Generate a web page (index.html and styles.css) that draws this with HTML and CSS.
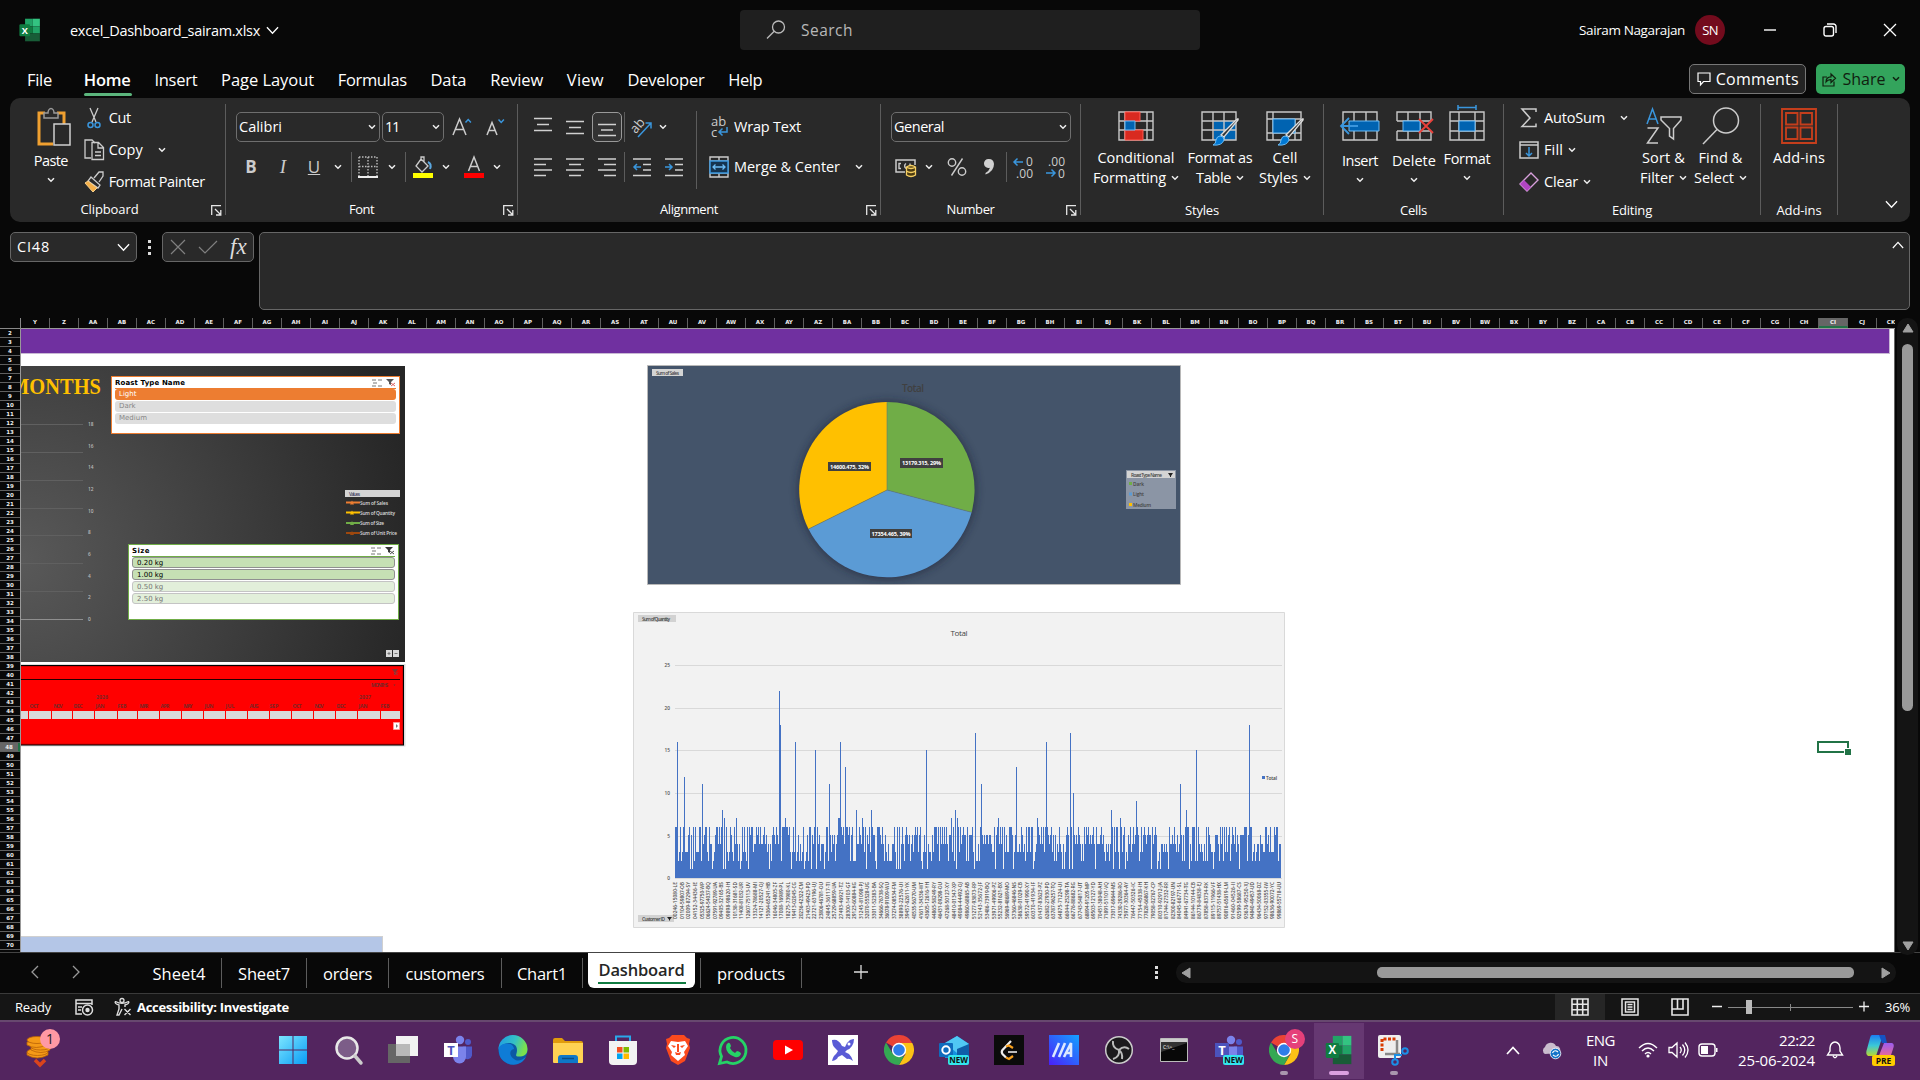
FILE: index.html
```html
<!DOCTYPE html>
<html lang="en">
<head>
<meta charset="utf-8">
<title>excel_Dashboard_sairam.xlsx - Excel</title>
<link rel="stylesheet" href="styles.css">
</head>
<body>
<svg class="defs" aria-hidden="true">
  <defs>
    <symbol id="chev" viewBox="0 0 8 6"><path d="M1 1.2 4 4.2 7 1.2" fill="none" stroke="currentColor" stroke-width="1.5"/></symbol>
    <symbol id="chev-lg" viewBox="0 0 14 9"><path d="m1 1 6 6.500L13 1" fill="none" stroke="currentColor" stroke-width="1.4"/></symbol>
    <symbol id="launch" viewBox="0 0 11 11"><path d="M.7 10V.7H10M4 4l5.5 5.5M9.800 5v5H5" fill="none" stroke="#e6e6e6" stroke-width="1.3"/></symbol>
    <symbol id="excel" viewBox="0 0 30 34">
      <path d="M8 1h11v11H8z" fill="#21a366"/><path d="M19 1h10v11H19z" fill="#33c481"/><path d="M8 12h11v10H8z" fill="#107c41"/><path d="M19 12h10v10H19z" fill="#21a366"/><path d="M8 22h21v11H8z" fill="#185c37"/>
      <rect x="0" y="9" width="15" height="17" rx="1.500" fill="#107c41"/><text x="7.500" y="22" class="logo-letter" font-size="13">X</text>
    </symbol>
    <symbol id="chrome" viewBox="0 0 30 30">
      <path d="M15 15 2 7.500A15 15 0 0 1 28 7.500z" fill="#ea4335"/><path d="M15 8h13.300A15 15 0 0 1 15 30l6.500-11z" fill="#fbc116"/><path d="M2 7.500 9 19l6 3 5-1-5 9A15 15 0 0 1 2 7.500z" fill="#34a853"/>
      <circle cx="15" cy="15" r="7.200" fill="#fff"/><circle cx="15" cy="15" r="5.800" fill="#2f7de9"/>
    </symbol>
    <symbol id="teams" viewBox="0 0 30 30">
      <circle cx="25" cy="7" r="3" fill="#5059c9"/><path d="M20 11.500h9v9a4.500 4.500 0 0 1-8 2z" fill="#5059c9"/><circle cx="17" cy="5" r="4.200" fill="#7b83eb"/><path d="M10 11.500h13v10a6.500 7 0 0 1-13 0z" fill="#7b83eb"/>
    </symbol>
  </defs>
</svg>

<header class="titlebar">
  <svg class="app-logo"><use href="#excel"/></svg>
  <span class="doc-name" data-w="190">excel_Dashboard_sairam.xlsx</span>
  <svg class="doc-chev"><use href="#chev-lg"/></svg>
  <div class="search"><svg width="22" height="22" viewBox="0 0 22 22"><circle cx="13.500" cy="8" r="6" fill="none" stroke="#bbb" stroke-width="1.300"/><path d="M9.200 12.300 2 19.500" stroke="#bbb" stroke-width="1.300"/></svg><span data-w="52">Search</span></div>
  <div class="account">
    <span data-w="106">Sairam Nagarajan</span><b class="avatar">SN</b>
    <svg class="win" viewBox="0 0 14 14"><path d="M1 7h12" stroke="#fff" stroke-width="1.400"/></svg>
    <svg class="win" viewBox="0 0 14 14"><rect x="1" y="3.500" width="9.500" height="9.500" rx="2" fill="none" stroke="#fff" stroke-width="1.400"/><path d="M4 1h6.500a2.500 2.500 0 0 1 2.500 2.500V10" fill="none" stroke="#fff" stroke-width="1.400"/></svg>
    <svg class="win" viewBox="0 0 14 14"><path d="m1 1 12 12M13 1 1 13" stroke="#fff" stroke-width="1.300"/></svg>
  </div>
</header>

<nav class="menu">
  <span data-w="25">File</span><span class="on" data-w="47">Home</span><span data-w="43">Insert</span><span data-w="93">Page Layout</span><span data-w="69">Formulas</span><span data-w="36">Data</span><span data-w="53">Review</span><span data-w="37">View</span><span data-w="77">Developer</span><span data-w="34">Help</span>
  <button class="comments"><svg width="14" height="15" viewBox="0 0 14 15"><path d="M1 1h12v8.500H6.500L3.500 13V9.500H1z" fill="none" stroke="#fff" stroke-width="1.200"/></svg><i data-w="83">Comments</i></button>
  <button class="share"><svg width="15" height="15" viewBox="0 0 15 15"><path d="M5 5H1v9h11V9.500M4 10q0-5 5-5.200V2l4.500 4.300L9 10.500V7.600Q6 7.300 4 10z" fill="none" stroke="#10200f" stroke-width="1.200"/></svg><i data-w="43">Share</i><svg class="c"><use href="#chev"/></svg></button>
</nav>

<section class="ribbon">
  <div class="group g-clip">
    <div class="body">
      <div class="big"><svg width="34" height="39" viewBox="0 0 34 39"><path d="M8 6H2v31h14M20 6h7v11" fill="none" stroke="#f0a030" stroke-width="3"/><path d="M7 11V6h4a3 4.500 0 0 1 6 0h4v5z" fill="#292929" stroke="#999" stroke-width="1.500"/><path d="M17 17h16v21H17z" fill="#292929" stroke="#d0d0d0" stroke-width="1.500"/></svg><span data-w="34">Paste</span><svg class="c"><use href="#chev"/></svg></div>
      <div class="stack">
        <div><svg width="20" height="22" viewBox="0 0 20 22"><path d="M6 1l6 14M14 1 8 15" stroke="#ccc" stroke-width="1.300"/><circle cx="6.500" cy="18" r="2.500" fill="none" stroke="#3a96dd" stroke-width="1.500"/><circle cx="13.500" cy="18" r="2.500" fill="none" stroke="#3a96dd" stroke-width="1.500"/></svg><span data-w="22">Cut</span></div>
        <div><svg width="20" height="22" viewBox="0 0 20 22"><path d="M7 19H1V1h7l3 3" fill="none" stroke="#ccc" stroke-width="1.300"/><path d="M8 3.500h6.500l5 5V20.500H8zM14 4v5h5M11 13h6M11 16.500h6" fill="none" stroke="#ccc" stroke-width="1.300"/></svg><span data-w="34">Copy</span><svg class="c far"><use href="#chev"/></svg></div>
        <div><svg width="20" height="22" viewBox="0 0 20 22"><path d="m10 7 5-6 4 0v4l-4 6M7 6l9 8-2 3-10-7z" fill="#292929" stroke="#ccc" stroke-width="1.300"/><path d="M4 10 1 12l8 9 4-4z" fill="#f5b04a" stroke="#f7cf8a"/></svg><span data-w="96">Format Painter</span></div>
      </div>
    </div>
    <footer><span data-w="58">Clipboard</span><svg class="launch"><use href="#launch"/></svg></footer>
  </div>
  <div class="group g-font">
    <div class="body col">
      <div class="row combos"><div class="combo"><span data-w="43">Calibri</span><svg class="c"><use href="#chev"/></svg></div><div class="combo small"><span data-w="14">11</span><svg class="c"><use href="#chev"/></svg></div>
        <svg width="20" height="22" viewBox="0 0 20 22"><path d="M1 19 7.500 3 14 19M3.500 13.500h8" fill="none" stroke="#ccc" stroke-width="1.500"/><path d="m13.500 6.500 2.700-3 2.700 3" fill="none" stroke="#3a96dd" stroke-width="1.500"/></svg>
        <svg width="20" height="22" viewBox="0 0 20 22"><path d="M1 19 6 6.500 11 19M3 14.500h6" fill="none" stroke="#ccc" stroke-width="1.500"/><path d="m12.500 3.500 2.700 3 2.700-3" fill="none" stroke="#3a96dd" stroke-width="1.500"/></svg></div>
      <div class="row tools">
        <b class="glyph">B</b><i class="glyph serif">I</i><u class="glyph">U</u><svg class="c"><use href="#chev"/></svg><hr>
        <svg width="20" height="22" viewBox="0 0 20 22"><path d="M1 1h18v19M1 1v19M10 1v19M1 10.500h18" fill="none" stroke="#bbb" stroke-width="1.400" stroke-dasharray="1.500 1.500"/><path d="M0 21h20" stroke="#eee" stroke-width="2"/></svg><svg class="c"><use href="#chev"/></svg><hr>
        <svg width="20" height="22" viewBox="0 0 20 22"><path d="m8 3 7 7-6 6-6-6zM8 5V1h3v5" fill="none" stroke="#ccc" stroke-width="1.300"/><path d="M15 6q4 2 2 7" fill="none" stroke="#5aa7e0" stroke-width="2"/><path d="M0 17h20v5H0z" fill="#ff0"/></svg><svg class="c"><use href="#chev"/></svg>
        <svg width="20" height="22" viewBox="0 0 20 22"><path d="M4.500 15 10 1l5.500 14M6.500 10.500h7" fill="none" stroke="#ccc" stroke-width="1.500"/><path d="M0 17h20v5H0z" fill="red"/></svg><svg class="c"><use href="#chev"/></svg>
      </div>
    </div>
    <footer><span data-w="25">Font</span><svg class="launch"><use href="#launch"/></svg></footer>
  </div>
  <div class="group g-align">
    <div class="body">
      <div class="col aligns">
        <div class="row">
          <svg width="18" height="22" viewBox="0 0 18 22"><path d="M0 2.500h18M3 8.500h12M0 14.500h18" stroke="#d0d0d0" stroke-width="1.500"/></svg>
          <svg width="18" height="22" viewBox="0 0 18 22"><path d="M0 5.500h18M3 11.500h12M0 17.500h18" stroke="#d0d0d0" stroke-width="1.500"/></svg>
          <span class="pressed"><svg width="18" height="22" viewBox="0 0 18 22"><path d="M0 8.500h18M3 14h12M0 19.500h18" stroke="#d0d0d0" stroke-width="1.500"/></svg></span><hr>
          <svg width="22" height="22" viewBox="0 0 22 22"><text x="0" y="14" font-size="13" fill="#ccc" transform="rotate(-50 7 11)">ab</text><path d="M7 21 20 7M14.500 7H20v5.500" fill="none" stroke="#3a96dd" stroke-width="1.500"/></svg><svg class="c"><use href="#chev"/></svg>
        </div>
        <div class="row">
          <svg width="18" height="20" viewBox="0 0 18 20"><path d="M0 2h18M0 7.500h12M0 13h18M0 18.500h12" stroke="#d0d0d0" stroke-width="1.500"/></svg>
          <svg width="18" height="20" viewBox="0 0 18 20"><path d="M0 2h18M3 7.500h12M0 13h18M3 18.500h12" stroke="#d0d0d0" stroke-width="1.500"/></svg>
          <svg width="18" height="20" viewBox="0 0 18 20"><path d="M0 2h18M6 7.500h12M0 13h18M6 18.500h12" stroke="#d0d0d0" stroke-width="1.500"/></svg><hr>
          <svg width="18" height="20" viewBox="0 0 18 20"><path d="M0 2h18M10 7.500h8M10 13h8M0 18.500h18" stroke="#d0d0d0" stroke-width="1.500"/><path d="M8 10H1m3-3-3 3 3 3" fill="none" stroke="#3a96dd" stroke-width="1.500"/></svg>
          <svg width="18" height="20" viewBox="0 0 18 20"><path d="M0 2h18M10 7.500h8M10 13h8M0 18.500h18" stroke="#d0d0d0" stroke-width="1.500"/><path d="M0 10h7M4 7l3 3-3 3" fill="none" stroke="#3a96dd" stroke-width="1.500"/></svg>
        </div>
      </div>
      <hr class="tall">
      <div class="col wraps">
        <div><svg width="20" height="22" viewBox="0 0 20 22"><text x="2" y="10" font-size="13" fill="#ccc">ab</text><text x="2" y="21" font-size="13" fill="#ccc">c</text><path d="M18 11v5h-8m3.500-3.500L10 16l3.500 3.500" fill="none" stroke="#3a96dd" stroke-width="1.500"/></svg><span data-w="67">Wrap Text</span></div>
        <div><svg width="20" height="22" viewBox="0 0 20 22"><path d="M1 1h18v20H1zM10 1v20M1 5h18M1 17h18" fill="none" stroke="#ccc" stroke-width="1.400"/><path d="M1 5h18v12H1z" fill="#153450" stroke="#3a96dd" stroke-width="1.500"/><path d="M4 11h12M6.500 8.500 4 11l2.500 2.500M13.500 8.500 16 11l-2.500 2.500" fill="none" stroke="#6cbcf5" stroke-width="1.300"/></svg><span data-w="106">Merge &amp; Center</span><svg class="c"><use href="#chev"/></svg></div>
      </div>
    </div>
    <footer><span data-w="58">Alignment</span><svg class="launch"><use href="#launch"/></svg></footer>
  </div>
  <div class="group g-num">
    <div class="body col">
      <div class="row combos"><div class="combo"><span data-w="50">General</span><svg class="c"><use href="#chev"/></svg></div></div>
      <div class="row tools">
        <svg width="22" height="22" viewBox="0 0 22 22"><path d="M10 16H1V4h19v5" fill="none" stroke="#ccc" stroke-width="1.500"/><path d="M6 7.500H4v5h2M11 7.500a3 3 0 0 0 0 5M15 7.500v2" fill="none" stroke="#ccc" stroke-width="1.400"/><path d="M11.500 11v8q4.500 3 9 0v-8q-4.500-3-9 0q4.500 3 9 0M11.500 15q4.500 3 9 0" fill="#4c3b10" stroke="#f5cf62" stroke-width="1.300"/></svg><svg class="c"><use href="#chev"/></svg>
        <svg width="20" height="20" viewBox="0 0 20 20"><circle cx="5" cy="5.500" r="3.700" fill="none" stroke="#ccc" stroke-width="1.400"/><circle cx="15" cy="14.500" r="3.700" fill="none" stroke="#ccc" stroke-width="1.400"/><path d="M15.500 1.500 4.500 18.500" stroke="#ccc" stroke-width="1.400"/></svg>
        <svg width="12" height="18" viewBox="0 0 12 18"><path d="M6 1a4.500 4.500 0 1 0 1 8.700Q6 13 2.500 15v1.500Q11 13.500 11 6 10.500 1 6 1z" fill="#d0d0d0"/></svg><hr>
        <svg width="22" height="22" viewBox="0 0 22 22"><text x="13" y="9.500" font-size="12" fill="#ccc">0</text><text x="3" y="21.500" font-size="12" fill="#ccc" textLength="17">.00</text><path d="M10 6H1m3.500-3.500L1 6l3.500 3.500" fill="none" stroke="#3a96dd" stroke-width="1.500"/></svg>
        <svg width="22" height="22" viewBox="0 0 22 22"><text x="3" y="9.500" font-size="12" fill="#ccc" textLength="17">.00</text><text x="13" y="21.500" font-size="12" fill="#ccc">0</text><path d="M1 17h9M6.500 13.500 10 17l-3.500 3.500" fill="none" stroke="#3a96dd" stroke-width="1.500"/></svg>
      </div>
    </div>
    <footer><span data-w="48">Number</span><svg class="launch"><use href="#launch"/></svg></footer>
  </div>
  <div class="group g-styles">
    <div class="body bigs">
      <div class="big two"><svg width="36" height="38" viewBox="0 0 36 38"><path d="M1 5h34v28H1zM1 14h34M1 23h34M7 5v28M29 5v28" fill="none" stroke="#c8c8c8" stroke-width="1.400"/><path d="M7 5h15v9H7zM7 23h18v10H7z" fill="#d92a20" stroke="#ff5a50"/><path d="M7 14h10v9H7z" fill="#0063b1" stroke="#6cbcf5"/></svg><span data-w="77">Conditional</span><p><span data-w="73">Formatting</span><svg class="c"><use href="#chev"/></svg></p></div>
      <div class="big two"><svg width="38" height="38" viewBox="0 0 38 38"><path d="M13 14h22v19H13z" fill="#0063b1"/><path d="M1 5h34v28H1zM1 14h34M1 23h34M12 5v28M23 5v28" fill="none" stroke="#c8c8c8" stroke-width="1.400"/><path d="m37 13-14 17-3-2L34 14q4-4 3-1z" fill="#333" stroke="#ddd" stroke-width="1.300"/><path d="M19 29q4 0 4 4-2 6-11 5 3-1 3-5 1-4 4-4z" fill="#0078d4" stroke="#6cbcf5"/></svg><span data-w="65">Format as</span><p><span data-w="35">Table</span><svg class="c"><use href="#chev"/></svg></p></div>
      <div class="big two"><svg width="38" height="38" viewBox="0 0 38 38"><path d="M1 5h34v28H1zM1 12h34M7 5v28M29 12v21M1 26h34" fill="none" stroke="#c8c8c8" stroke-width="1.400"/><path d="M7 12h22v14H7z" fill="#0063b1" stroke="#6cbcf5"/><path d="m37 13-14 17-3-2L34 14q4-4 3-1z" fill="#333" stroke="#ddd" stroke-width="1.300"/><path d="M19 29q4 0 4 4-2 6-11 5 3-1 3-5 1-4 4-4z" fill="#0078d4" stroke="#6cbcf5"/></svg><span data-w="25">Cell</span><p><span data-w="39">Styles</span><svg class="c"><use href="#chev"/></svg></p></div>
    </div>
    <footer><span data-w="34">Styles</span></footer>
  </div>
  <div class="group g-cells">
    <div class="body bigs">
      <div class="big"><svg width="40" height="39" viewBox="0 0 40 39"><path d="M3 5h34v28H3zM14 5v28M26 5v28" fill="none" stroke="#c8c8c8" stroke-width="1.400"/><path d="M9 14h30v10H9z" fill="#0063b1" stroke="#6cbcf5"/><path d="M18 19H1M9 11l-8 8 8 8" fill="none" stroke="#3a96dd" stroke-width="1.800"/></svg><span data-w="36">Insert</span><svg class="c"><use href="#chev"/></svg></div>
      <div class="big"><svg width="40" height="39" viewBox="0 0 40 39"><path d="M3 14V5h34v9M3 24v9h34v-9M14 5v28M26 5v28M3 14h34M3 24h34" fill="none" stroke="#c8c8c8" stroke-width="1.400"/><path d="M9 14h17v10H9z" fill="#0063b1" stroke="#6cbcf5"/><path d="m25 12 14 14M39 12 25 26" stroke="#e8403a" stroke-width="1.800"/></svg><span data-w="44">Delete</span><svg class="c"><use href="#chev"/></svg></div>
      <div class="big up"><svg width="38" height="40" viewBox="0 0 38 40"><path d="M2 8h34v28H2zM2 17h34M2 27h34M11 8v28M27 8v28" fill="none" stroke="#c8c8c8" stroke-width="1.400"/><path d="M11 17h16v10H11z" fill="#0063b1" stroke="#6cbcf5"/><path d="M10 3.500h18M10 1v5M28 1v5" fill="none" stroke="#3a96dd" stroke-width="1.500"/></svg><span data-w="47">Format</span><svg class="c"><use href="#chev"/></svg></div>
    </div>
    <footer><span data-w="27">Cells</span></footer>
  </div>
  <div class="group g-edit">
    <div class="body">
      <div class="stack">
        <div><svg width="20" height="22" viewBox="0 0 20 22"><path d="M17 5V2H3l8 9-8 8.500h14v-3" fill="none" stroke="#ccc" stroke-width="1.500"/></svg><span data-w="61">AutoSum</span><svg class="c mid"><use href="#chev"/></svg></div>
        <div><svg width="20" height="20" viewBox="0 0 20 20"><path d="M1 2h18v16H1zM1 5h18" fill="none" stroke="#ccc" stroke-width="1.500"/><path d="M10 7v9M7 13l3 3 3-3" fill="none" stroke="#3a96dd" stroke-width="1.500"/></svg><span data-w="19">Fill</span><svg class="c"><use href="#chev"/></svg></div>
        <div><svg width="20" height="22" viewBox="0 0 20 22"><path d="M12 2l7 7-11 11-7-7z" fill="none" stroke="#d8a0dc" stroke-width="1.400"/><path d="m5 9 7 7-4 4-7-7z" fill="#b146c2"/></svg><span data-w="34">Clear</span><svg class="c"><use href="#chev"/></svg></div>
      </div>
      <div class="big two"><svg width="38" height="38" viewBox="0 0 38 38"><path d="M2 17 7.500 2 13 17M4 12h7" fill="none" stroke="#3a96dd" stroke-width="1.500"/><path d="M2.500 21H13L2.500 36H13M16 10h20v3l-7.500 8.500V32l-4-3v-7.500L16 13z" fill="none" stroke="#ccc" stroke-width="1.500"/></svg><span data-w="43">Sort &amp;</span><p><span data-w="34">Filter</span><svg class="c"><use href="#chev"/></svg></p></div>
      <div class="big two"><svg width="38" height="38" viewBox="0 0 38 38"><circle cx="24" cy="13.500" r="12.500" fill="none" stroke="#ccc" stroke-width="1.500"/><path d="M15 22.500 1 37" stroke="#ccc" stroke-width="1.500"/></svg><span data-w="44">Find &amp;</span><p><span data-w="40">Select</span><svg class="c"><use href="#chev"/></svg></p></div>
    </div>
    <footer><span data-w="40">Editing</span></footer>
  </div>
  <div class="group g-add">
    <div class="body bigs"><div class="big two"><svg width="36" height="38" viewBox="0 0 36 38"><path d="M1 2h34v34H1zM5 6h11.500v11.500H5zM19.500 6H31v11.500H19.500zM5 20.500h11.500V32H5zM19.500 20.500H31V32H19.500z" fill="none" stroke="#c43e1c" stroke-width="1.900"/></svg><span data-w="52">Add-ins</span></div></div>
    <footer><span data-w="45">Add-ins</span></footer>
  </div>
  <svg class="collapse"><use href="#chev-lg"/></svg>
</section>

<section class="formula">
  <div class="namebox"><span data-w="33">CI48</span><svg><use href="#chev-lg"/></svg></div>
  <svg class="dots" width="4" height="16" viewBox="0 0 4 16"><path d="M0 0h3v3H0zM0 6h3v3H0zM0 12h3v3H0z" fill="#ddd"/></svg>
  <div class="fx"><svg width="16" height="16" viewBox="0 0 16 16"><path d="m1 1 14 14M15 1 1 15" stroke="#808080" stroke-width="1.200"/></svg><svg width="20" height="14" viewBox="0 0 20 14"><path d="m1 7 6 6L19 1" fill="none" stroke="#808080" stroke-width="1.200"/></svg><em>fx</em></div>
  <div class="input"><svg><use href="#chev-lg"/></svg></div>
</section>

<main class="sheet">
  <div class="corner"></div>
  <div class="cols" id="cols"></div>
  <div class="rows" id="rows"></div>
  <div class="canvas">
    <div class="band"></div>
    <div class="lowband"></div>
    <svg class="obj trend" viewBox="21 366 384 296" width="384" height="296">
      <defs><radialGradient id="dark" gradientUnits="userSpaceOnUse" cx="21" cy="560" r="400"><stop offset="0" stop-color="#595959"/><stop offset="1" stop-color="#262626"/></radialGradient></defs>
      <path d="M21 366h384v296H21z" fill="url(#dark)"/>
      <text x="101" y="394" text-anchor="end" class="months" textLength="91" lengthAdjust="spacingAndGlyphs">MONTHS</text>
      <path d="M21 424.500h62M21 452.500h62M21 480.500h62M21 508.500h62M21 535.500h62M21 563.500h62M21 591.500h62" stroke="#606060"/><path d="M21 619.500h62" stroke="#8f8f8f"/>
      <g id="trendAxis" class="tiny" fill="#bbb"></g>
      <path d="M345 490h55v7h-55z" fill="#d4d4d4"/><text x="349" y="495.500" class="tiny" fill="#446" textLength="11">Values</text>
      <g stroke-width="2"><path d="M346 502.500h14" stroke="#ed7d31"/><path d="M346 512.500h14" stroke="#ffc000"/><path d="M346 523h14" stroke="#70ad47"/><path d="M346 533h14" stroke="#9e480e"/></g>
      <path d="m352 500.500 2 4h-4z" fill="#ed7d31"/><path d="m352 510.500 2 4h-4z" fill="#ffc000"/><path d="m352 521 2 4h-4z" fill="#70ad47"/><path d="m352 531 2 4h-4z" fill="#9e480e"/>
      <g class="tiny" fill="#ddd"><text x="360" y="504.500" textLength="28">Sum of Sales</text><text x="360" y="514.500" textLength="35">Sum of Quantity</text><text x="360" y="525" textLength="24">Sum of Size</text><text x="360" y="535" textLength="37">Sum of Unit Price</text></g>
      <path d="M386 650h6v7h-6zM393 650h6v7h-6z" fill="#d8d8d8"/><path d="M387.500 653.500h3M389 652v3M394.500 653.500h3" stroke="#777"/>
    </svg>
    <div class="obj slicer roast"><h4><b data-w="70">Roast Type Name</b><svg width="24" height="8" viewBox="0 0 24 8"><path d="M0 1h4M1 4h4M0 7h4M6 1h4M6 7h4" stroke="#777"/><path d="M14 0h8l-3 3v3l-2-1V3z" fill="#555"/><path d="m19 4 4 3M23 4l-4 3" stroke="#d66"/></svg></h4><p class="sel">Light</p><p>Dark</p><p>Medium</p></div>
    <div class="obj slicer size"><h4><b data-w="18">Size</b><svg width="24" height="8" viewBox="0 0 24 8"><path d="M0 1h4M1 4h4M0 7h4M6 1h4M6 7h4" stroke="#777"/><path d="M14 0h8l-3 3v3l-2-1V3z" fill="#333"/><path d="m19 4 4 3M23 4l-4 3" stroke="#555"/></svg></h4><p class="sel">0.20 kg</p><p class="sel">1.00 kg</p><p>0.50 kg</p><p>2.50 kg</p></div>
    <svg class="obj timeline" viewBox="21 664 385 83" width="385" height="83">
      <path d="M21 664h384.500v82.500H21" fill="#ddd"/><path d="M21 665h383v80.500H21" fill="#000"/><path d="M21 666h382v78.500H21" fill="#d80000"/><path d="M21 667h381v76.500H21" fill="red"/><path d="M21 679.500h379" stroke="#200"/>
      <path d="M392 669h6l-2 3v3l-2-1v-2z" fill="#8d3030"/><path d="m394 672 4 3M398 672l-4 3" stroke="#b03030"/><path d="M393.500 684.500h2l-1 1.500z" fill="#6b3030"/>
      <g class="tiny time-text" id="timeLabels"><text x="371" y="687" textLength="17">MONTHS</text><text x="96" y="699" textLength="12">2026</text><text x="359" y="699" textLength="12">2027</text></g>
      <g id="timeCells" fill="#d9d9d9"></g>
      <path d="M393.500 722.500h6v7h-6z" fill="#fff" stroke="#f99"/><path d="M396 724v4l2-2z" fill="#777"/>
    </svg>
    <svg class="obj pie" viewBox="647 365 534 220" width="534" height="220">
      <defs><filter id="glow" x="-20%" y="-20%" width="140%" height="140%"><feGaussianBlur stdDeviation="4"/></filter></defs>
      <path d="M647.500 365.500h533v219h-533z" fill="#44546a" stroke="#b8b8b8"/>
      <path d="M652 369h31v7h-31z" fill="#d4d4d4"/><text x="656" y="374.500" class="tiny" fill="#444" textLength="23">Sum of Sales</text>
      <text x="913" y="391.500" text-anchor="middle" font-size="10" font-weight="600" fill="#404040" textLength="22">Total</text>
      <circle cx="887" cy="490" r="89" fill="#1a2434" opacity=".6" filter="url(#glow)"/>
      <path d="M887 490V402a87.700 87.700 0 0 1 84.600 110.300z" fill="#70ad47"/><path d="M887 490 971.600 512.300A87.700 87.700 0 0 1 808.500 529z" fill="#5b9bd5"/><path d="M887 490 808.500 529A87.700 87.700 0 0 1 887 402z" fill="#ffc000"/>
      <path d="M887 402v88l84.600 22.300M887 490l-78.500 39" fill="none" stroke="#687a70" stroke-width=".6"/>
      <path d="M828 462h43v9h-43zM900 458h43v10h-43zM870 529h42v9h-42z" fill="#404040"/>
      <g class="pie-num"><text x="849.500" y="469" textLength="39">14600.475, 32%</text><text x="921.500" y="465" textLength="39">13179.315, 29%</text><text x="891" y="536" textLength="39">17354.465, 39%</text></g>
      <path d="M1126 470h50v39h-50z" fill="#8b95a5"/><path d="M1127 471h48v7h-48z" fill="#d4d4d4"/><text x="1131" y="476.500" class="tiny" fill="#444" textLength="31">Roast Type Name</text><path d="M1168 473h5l-2 3v1h-1v-1z" fill="#222"/>
      <path d="M1129 482h3v3h-3z" fill="#70ad47"/><path d="M1129 492.500h3v3h-3z" fill="#5b9bd5"/><path d="M1129 503h3v3h-3z" fill="#ffc000"/>
      <g class="tiny" fill="#444"><text x="1133" y="485.500" textLength="11">Dark</text><text x="1133" y="495.500" textLength="11">Light</text><text x="1133" y="506.500" textLength="18">Medium</text></g>
    </svg>
    <svg class="obj bars" viewBox="633 612 652 316" width="652" height="316">
      <path d="M633.500 612.500h651v315h-651z" fill="#f2f2f2" stroke="#d9d9d9"/>
      <path d="M638 615h38v7h-38zM638 915h36v7h-36z" fill="#d2d2d2"/><text x="642" y="620.500" class="tiny" fill="#444" textLength="28">Sum of Quantity</text><text x="642" y="920.500" class="tiny" fill="#444" textLength="23">Customer ID</text><path d="M667 917h5l-2 2.500v1h-1v-1z" fill="#222"/>
      <text x="959" y="636" text-anchor="middle" font-size="8" fill="#444" textLength="17">Total</text>
      <path d="M675 665.500h607M675 708.500h607M675 750.500h607M675 793.500h607M675 836.500h607M675 878.500h607" stroke="#d9d9d9"/>
      <path id="barPath" fill="#4472c4" shape-rendering="crispEdges"/>
      <g class="tiny" fill="#555" text-anchor="end"><text x="670" y="667">25</text><text x="670" y="710">20</text><text x="670" y="752">15</text><text x="670" y="795">10</text><text x="670" y="838">5</text><text x="670" y="880">0</text></g>
      <g id="orderLabels" class="order"></g>
      <path d="M1262 776h3v3h-3z" fill="#4472c4"/><text x="1266" y="779.500" class="tiny" fill="#444" textLength="11">Total</text>
    </svg>
    <div class="obj cursor"></div>
  </div>
  <div class="vscroll"><svg width="12" height="10" viewBox="0 0 12 10"><path d="M6 1 11 9H1z" fill="#a0a0a0" stroke="#a0a0a0" stroke-linejoin="round"/></svg><i></i><svg width="12" height="10" viewBox="0 0 12 10"><path d="M6 9 11 1H1z" fill="#a0a0a0" stroke="#a0a0a0" stroke-linejoin="round"/></svg></div>
</main>

<nav class="tabs">
  <svg class="arrows" width="52" height="14" viewBox="0 0 52 14"><path d="M8 1 2 7l6 6M43 1l6 6-6 6" fill="none" stroke="#999" stroke-width="1.300"/></svg>
  <span class="t1"><a data-w="53">Sheet4</a></span><span class="t2"><a data-w="52">Sheet7</a></span><span class="t3"><a data-w="49">orders</a></span><span class="t4"><a data-w="79">customers</a></span><span class="t5"><a data-w="50">Chart1</a></span><span class="active"><a data-w="86">Dashboard</a></span><span class="t7"><a data-w="68">products</a></span>
  <svg class="plus" width="16" height="16" viewBox="0 0 16 16"><path d="M8 1v14M1 8h14" stroke="#ddd" stroke-width="1.300"/></svg>
  <svg class="dots" width="4" height="14" viewBox="0 0 4 14"><path d="M0 0h3v3H0zM0 5h3v3H0zM0 10h3v3H0z" fill="#ddd"/></svg>
  <div class="hscroll"><svg width="10" height="12" viewBox="0 0 10 12"><path d="M1 6 9 1v10z" fill="#a0a0a0" stroke="#a0a0a0" stroke-linejoin="round"/></svg><i></i><svg width="10" height="12" viewBox="0 0 10 12"><path d="M9 6 1 1v10z" fill="#a0a0a0" stroke="#a0a0a0" stroke-linejoin="round"/></svg></div>
</nav>

<footer class="status">
  <span data-w="36">Ready</span>
  <svg class="macro" width="18" height="18" viewBox="0 0 18 18"><path d="M7 16H1V2h16v5M1 5.500h16M3 9h4M3 12h3" fill="none" stroke="#ddd" stroke-width="1.500"/><circle cx="12.500" cy="12" r="5" fill="#151515" stroke="#ddd" stroke-width="1.500"/><circle cx="12.500" cy="12" r="2.200" fill="#ddd"/></svg>
  <svg class="acc" width="18" height="18" viewBox="0 0 18 18"><circle cx="8" cy="2.500" r="2" fill="none" stroke="#ddd" stroke-width="1.300"/><path d="M1.500 3.500q-1.500 2 3.500 3.500v4L3 17h2l3-6M14.500 3.500q1.500 2-3.500 3.500v2M1.500 3.500Q8 7 14.500 3.500M10.500 11l6 6M16.500 11l-6 6" fill="none" stroke="#ddd" stroke-width="1.400"/></svg>
  <b data-w="152">Accessibility: Investigate</b>
  <div class="views">
    <span class="view on"><svg width="18" height="18" viewBox="0 0 18 18"><path d="M1 1h16v16H1zM6.300 1v16M11.700 1v16M1 6.300h16M1 11.700h16" fill="none" stroke="#e6e6e6" stroke-width="1.600"/></svg></span>
    <span class="view"><svg width="18" height="18" viewBox="0 0 18 18"><path d="M1 1h16v16H1zM4.500 4h9v10h-9zM6.500 6.500h5M6.500 9h5M6.500 11.500h5" fill="none" stroke="#e6e6e6" stroke-width="1.500"/></svg></span>
    <span class="view"><svg width="18" height="18" viewBox="0 0 18 18"><path d="M1 1h16v16H1zM1 11h11V1M6.500 1v10" fill="none" stroke="#e6e6e6" stroke-width="1.600"/></svg></span>
    <svg width="160" height="16" viewBox="1715 1000 160 16"><path d="M1712 1007.500h10M1859 1007.500h10M1864 1002.500v10" stroke="#eee" stroke-width="1.300"/><path d="M1728 1008.500h125M1790.500 1005v7" stroke="#888"/><path d="M1746 1001h6v14h-6z" fill="#bbb"/></svg>
    <span data-w="25">36%</span>
  </div>
</footer>

<footer class="taskbar">
  <div class="widget"><svg width="32" height="40" viewBox="0 0 32 40"><g fill="#f59a17" stroke="#b96207" stroke-width=".8"><path d="M1 25v3q10 6 21 0v-3z"/><ellipse cx="11.500" cy="25" rx="10.500" ry="3.500"/><path d="M5 20v3q10 5 19 0v-3z"/><ellipse cx="14.500" cy="20" rx="9.500" ry="3"/><path d="M1 15v3q9 5 19 0v-3z"/><ellipse cx="11" cy="13" rx="10" ry="3.500"/></g><path d="m9 33 5 5 5-5" fill="none" stroke="#d9441c" stroke-width="3.500"/></svg><b>1</b></div>
  <div class="apps">
    <span><svg width="30" height="30" viewBox="0 0 30 30"><defs><linearGradient id="wn" x2="1" y2="1"><stop stop-color="#7ce6ff"/><stop offset="1" stop-color="#0a9cf5"/></linearGradient></defs><path d="M1 1h13.500v13.500H1zM15.500 1H29v13.500H15.500zM1 15.500h13.500V29H1zM15.500 15.500H29V29H15.500z" fill="url(#wn)"/></svg></span>
    <span><svg width="30" height="30" viewBox="0 0 30 30"><circle cx="14" cy="13" r="10.500" fill="#7c5d88" stroke="#e8e8e8" stroke-width="2.500"/><path d="m22 21 6 7" stroke="#ccc" stroke-width="3.500" stroke-linecap="round"/></svg></span>
    <span><svg width="30" height="30" viewBox="0 0 30 30"><path d="M8 1h22v20H8z" fill="#f2f2f2"/><path d="M0 9h22v19H0z" fill="#666"/><path d="M8 9h14v12H8z" fill="#b9b9b9"/></svg></span>
    <span><svg width="30" height="30" viewBox="0 0 30 30"><use href="#teams"/><path d="M1 8h14v14H1z" fill="#fff"/><text x="8" y="20" class="mark" font-size="13" fill="#4b53bc">T</text></svg></span>
    <span><svg width="30" height="30" viewBox="0 0 30 30"><defs><linearGradient id="ed" x2="1" y2=".3"><stop stop-color="#1d9ae6"/><stop offset=".6" stop-color="#35c1c4"/><stop offset="1" stop-color="#7be04e"/></linearGradient></defs><circle cx="15" cy="15" r="14.500" fill="#0c59a4"/><path d="M.5 15A14.500 14.500 0 0 1 29.500 14c0 6-4 7.500-8.500 7.500-5 0-2-2-2-6.500 0-5-4-7-8-7-6 0-10 4-10.500 7z" fill="url(#ed)"/><path d="M1 12c5-6 15-4 15 2-5 1-5 7 0 10 4 3 8 1 12-2-4 8-14 10-21 5C2 24 0 18 1 12z" fill="#0f7cd6"/></svg></span>
    <span><svg width="30" height="30" viewBox="0 0 30 30"><path d="M0 5q0-2 2-2h7l3 3h16q2 0 2 2v10H0z" fill="#e19b0c"/><path d="M0 8h30v19q0 1-1 1H1q-1 0-1-1z" fill="#ffd253"/><path d="M5 28v-5q0-3 3-3h14q3 0 3 3v5z" fill="#0f78c8"/><path d="M9 23.500h12" stroke="#0a4d86" stroke-width="1.500"/></svg></span>
    <span><svg width="30" height="30" viewBox="0 0 30 30"><path d="M8 7V1.500h14V7" fill="none" stroke="#2aa8ea" stroke-width="2"/><path d="M1 6h28v20q0 4-4 4H5q-4 0-4-4z" fill="#f3f3f3"/><path d="M9 12h5.500v5.500H9z" fill="#f25022"/><path d="M15.500 12H21v5.500h-5.500z" fill="#7fba00"/><path d="M9 18.500h5.500V24H9z" fill="#00a4ef"/><path d="M15.500 18.500H21V24h-5.500z" fill="#ffb900"/></svg></span>
    <span><svg width="30" height="30" viewBox="0 0 30 30"><path d="M9 0h12l3 3 3 1-1 5 1 4-5 13-7 4-7-4L3 13l1-4-1-5 3-1z" fill="#fb4a1d"/><path d="m8 6 7 1 7-1 3 5-4 6 1 3-7 6-7-6 1-3-4-6z" fill="#fff"/><path d="m8 10 5 1-2 2zM22 10l-5 1 2 2zM12 17l3 1 3-1-1 3h-4zM14 9h2v8h-2z" fill="#fb4a1d"/></svg></span>
    <span><svg width="30" height="30" viewBox="0 0 30 30"><path d="m1.500 28.500 2-7A13 13 0 1 1 9 27z" fill="#54265f" stroke="#25d366" stroke-width="2.800"/><path d="M10 8q2-1 3 3l-1 2q2 4 5 5l2-2q4 1 4 3-2 4-6 3Q8 19 8 12q0-3 2-4z" fill="#25d366"/></svg></span>
    <span><svg width="30" height="30" viewBox="0 0 30 30"><rect y="5" width="30" height="20" rx="4" fill="#f00"/><path d="m12 10.500 8 4.500-8 4.500z" fill="#fff"/></svg></span>
    <span><svg width="30" height="30" viewBox="0 0 30 30"><path d="M0 0h30v30H0z" fill="#fff"/><path d="M4 5q4-1 6 1 3 2 4 5l3 1q2-5 5-7 3-1 4-1 0 4-2 7-2 3-5 4l-2 2 4 2q3 3 4 7-4-3-6-2l-5-4-4 2q-1 3-6 4 1-5 4-7l2-3-3-3Q4 10 4 5z" fill="#5a5bd6"/><circle cx="21" cy="9" r="1.500" fill="#fff"/></svg></span>
    <span><svg width="30" height="30"><use href="#chrome"/></svg></span>
    <span><svg width="30" height="30" viewBox="0 0 30 30"><path d="m6 8 12-7 12 8v14H6z" fill="#1490df"/><path d="m6 8 12-7 12 8-12 9z" fill="#50c8f4"/><path d="M18 14 30 9v15H18z" fill="#0f5ea8"/><rect y="8" width="14" height="14" rx="1" fill="#0f6cbd"/><circle cx="7" cy="15" r="3.700" fill="none" stroke="#fff" stroke-width="2"/><rect x="9" y="20" width="21" height="10" rx="2" fill="#33e5ee"/><text x="19.500" y="28" class="mark" font-size="8" fill="#111">NEW</text></svg></span>
    <span><svg width="30" height="30" viewBox="0 0 30 30"><path d="M0 0h30v30H0z" fill="#0b0b0b"/><path d="M17 6 8.500 15q-1.500 2 0 4l3.500 3.500" fill="none" stroke="#eee" stroke-width="2.200"/><path d="m12 11.500 3-1 4 2.500M12 22.500l3 1.500 4-3" fill="none" stroke="#f7a01d" stroke-width="2.200"/><path d="M14 17h9" stroke="#bbb" stroke-width="2"/></svg></span>
    <span><svg width="30" height="30" viewBox="0 0 30 30"><defs><linearGradient id="mi" y1="1" x2="1" y2="0"><stop stop-color="#4a1ffa"/><stop offset="1" stop-color="#13a2ff"/></linearGradient></defs><path d="M0 0h30v30H0z" fill="url(#mi)"/><path d="m4 22 6-14M10 22l6-14M15 22l7-14v14M18 18h4" fill="none" stroke="#dce8ff" stroke-width="2.600"/></svg></span>
    <span><svg width="30" height="30" viewBox="0 0 30 30"><circle cx="15" cy="15" r="13.300" fill="#1c1a1d" stroke="#ccc" stroke-width="1.500"/><path d="M15 15Q8 13 9 6M15 15q5-5 10-1M15 15q1 7-6 9M15 15q4 3 3 9" fill="none" stroke="#bbb" stroke-width="2"/></svg></span>
    <span><svg width="28" height="24" viewBox="0 0 28 24"><path d="M.5.500h27v23H.5z" fill="#080808" stroke="#bbb"/><path d="M1 1h26v3H1z" fill="#ccc"/><path d="M1 14 27 5v-1H1z" fill="#333"/><text x="3" y="11" font-size="5" fill="#fff">C:\&gt;_</text></svg></span>
    <span><svg width="30" height="30" viewBox="0 0 30 30"><use href="#teams"/><path d="M1 8h14v14H1z" fill="#4b53bc"/><text x="8" y="20" class="mark" font-size="13" fill="#fff">T</text><rect x="9" y="20" width="21" height="10" rx="2" fill="#33e5ee"/><text x="19.500" y="28" class="mark" font-size="8" fill="#111">NEW</text></svg></span>
    <span class="run"><svg width="30" height="30"><use href="#chrome"/></svg><b class="s">S</b></span>
    <span class="run cur"><svg width="30" height="30"><use href="#excel"/></svg></span>
    <span class="run"><svg width="32" height="32" viewBox="0 0 32 32"><rect width="23" height="23" y="1" rx="2" fill="#eee"/><path d="M4 17V5h14" fill="none" stroke="#d83b01" stroke-width="3" stroke-dasharray="3 1.500"/><path d="M19 6v14M7 20h15" stroke="#888" stroke-width="2.500"/><circle cx="17" cy="28" r="2.800" fill="none" stroke="#1b8fe6" stroke-width="2"/><circle cx="27" cy="17" r="2.800" fill="none" stroke="#1b8fe6" stroke-width="2"/><path d="M17 25v-4h7" fill="none" stroke="#1b8fe6" stroke-width="2"/></svg></span>
  </div>
  <div class="tray">
    <svg width="14" height="9" viewBox="0 0 14 9"><path d="m1 8 6-6.500L13 8" fill="none" stroke="#fff" stroke-width="1.700"/></svg>
    <svg width="21" height="18" viewBox="0 0 21 18"><path d="M4 13a4 4 0 0 1 0-7 6 6 0 0 1 11-1 4 4 0 0 1 3 7z" fill="#c9bccd"/><circle cx="14.500" cy="12.500" r="5.300" fill="#1473c8" stroke="#fff" stroke-width=".8"/><path d="M11.500 12q1-3 4-2l1.500 1M17.500 13q-1 3-4 2L12 14" fill="none" stroke="#fff" stroke-width="1.200"/></svg>
    <div class="lang"><span data-w="29">ENG</span><span data-w="15">IN</span></div>
    <svg width="20" height="16" viewBox="0 0 20 16"><path d="M1 6q9-9 18 0M4 9q6-6 12 0M7 12q3-3 6 0" fill="none" stroke="#fff" stroke-width="1.400"/><circle cx="10" cy="14" r="1.600" fill="#fff"/></svg>
    <svg width="20" height="18" viewBox="0 0 20 18"><path d="M1 6.500v5h3l5 4.500V2L4 6.500zM12 6q2.500 3 0 6M14.500 3.500q4.500 5.500 0 11M17 1.500q6 7.500 0 15" fill="none" stroke="#fff" stroke-width="1.300"/></svg>
    <svg width="20" height="14" viewBox="0 0 20 14"><rect x="1" y="1" width="16" height="12" rx="3" fill="none" stroke="#fff" stroke-width="1.400"/><path d="M3 3h7v8H3zM18 5h1.500v4H18z" fill="#fff"/></svg>
    <div class="clock"><span data-w="36">22:22</span><span data-w="77">25-06-2024</span></div>
    <svg width="18" height="20" viewBox="0 0 18 20"><path d="M1.500 15 4 11V8a5 6 0 0 1 10 0v3l2.500 4zM7 16q2 3.500 4 0" fill="none" stroke="#fff" stroke-width="1.400"/></svg>
    <svg width="30" height="34" viewBox="0 0 30 34"><defs><linearGradient id="cp1" x2="0" y2="1"><stop stop-color="#1b7ff2"/><stop offset=".5" stop-color="#3ac7d8"/><stop offset="1" stop-color="#b9d92f"/></linearGradient><linearGradient id="cp2" x2="0" y2="1"><stop stop-color="#9b5cf0"/><stop offset="1" stop-color="#f66a8a"/></linearGradient></defs><path d="M7 2h11l-7 21H3Q0 21 2 16L5 5Q5.500 2 7 2z" fill="url(#cp1)"/><path d="M19 10h8q3 1 1 6l-3 9H13z" fill="url(#cp2)"/><path d="M14 2h6l2 8h-5z" fill="#1553c4"/><rect x="7" y="22" width="23" height="11" rx="2.500" fill="#fc0"/><text x="18.500" y="30.700" class="mark" font-size="8.500" fill="#111">PRE</text></svg>
  </div>
</footer>
<script src="app.js"></script>
</body>
</html>
```

FILE: styles.css
```css
* { box-sizing: border-box; }
html, body { margin: 0; height: 100%; }
body { width: 1920px; height: 1080px; overflow: hidden; background: #080808; color: #fff; font: 14.5px/20px "Open Sans", "Noto Sans", sans-serif; display: flex; flex-direction: column; }
svg { display: block; flex: none; overflow: visible; }
svg text { font-family: "Open Sans", sans-serif; }
.defs { display: none; }
hr { border: 0; margin: 0; width: 1px; height: 30px; background: #5c5c5c; }
[data-w] { white-space: nowrap; display: inline-block; flex: none; }
.c { width: 8px; height: 6px; color: #eee; }
.logo-letter, .mark { font-weight: 700; text-anchor: middle; }
.logo-letter { fill: #fff; }
.far { margin-left: 10px; }
.mid { margin-left: 10px; }

.titlebar { height: 60px; flex: none; display: flex; align-items: center; padding-left: 19px; }
.app-logo { width: 22px; height: 24px; }
.doc-name { margin-left: 29px; margin-top: 1px; }
.doc-chev { width: 13px; height: 9px; margin-left: 6px; }
.search { margin-left: 461px; width: 460px; height: 40px; border-radius: 4px; background: #1f1f1f; display: flex; align-items: center; padding: 0 0 1px 25px; gap: 14px; font-size: 15.5px; color: #b8b8b8; }
.account { margin-left: auto; padding-right: 23px; display: flex; align-items: center; font-size: 13.5px; }
.avatar { width: 30px; height: 30px; border-radius: 50%; background: #730b1d; margin: 0 38px 0 10px; font: 13px/30px "Open Sans", sans-serif; text-align: center; letter-spacing: -.6px; }
.win { width: 14px; height: 14px; margin-right: 46px; }
.win:last-child { margin-right: 0; }

.menu { height: 38px; flex: none; display: flex; align-items: flex-start; padding: 5px 15px 0 27px; gap: 23.7px; font-size: 16.5px; line-height: 30px; }
.menu .on { font-weight: 600; position: relative; margin-left: 8px; }
.menu .on::after { content: ""; position: absolute; left: 0; width: 48px; height: 3px; bottom: -1px; background: #5bb57c; border-radius: 2px; }
.menu button { height: 30px; padding: 0; display: flex; align-items: center; justify-content: center; font: 16px/28px "Open Sans", sans-serif; border-radius: 5px; margin-top: -1px; }
.menu i { font-style: normal; }
.comments { width: 117px; margin-left: auto; background: #242424; border: 1px solid #777; color: #fff; gap: 5px; }
.menu .share { width: 89px; margin-left: -14px; background: #33a45c; border: 0; color: #10200f; gap: 6px; }
.share .c { color: #10200f; }

.ribbon { height: 124px; flex: none; margin: 0 10px; background: #292929; border-radius: 10px; display: flex; position: relative; }
.group { display: flex; flex-direction: column; border-right: 1px solid #5c5c5c; height: 111px; margin-top: 6px; }
.g-clip { width: 216px; } .g-font { width: 292px; } .g-align { width: 363px; } .g-num { width: 200px; } .g-styles { width: 243px; } .g-cells { width: 180px; } .g-edit { width: 257px; } .g-add { width: 77px; }
.body { height: 94px; display: flex; flex: none; }
.col { display: flex; flex-direction: column; }
.group footer { height: 22px; display: flex; justify-content: center; align-items: center; font-size: 13px; position: relative; margin: 1px 0 0 -16px; }
.g-font footer, .g-align footer, .g-num footer { margin-left: -20px; }
.g-styles footer, .g-cells footer, .g-edit footer, .g-add footer { margin: 2px 0 0; }
.launch { position: absolute; right: 3px; top: 6px; width: 11px; height: 11px; }
.big { display: flex; flex-direction: column; align-items: center; padding-top: 3px; }
.big > span { margin-top: 4px; line-height: 21px; }
.big > .c { margin-top: 6px; }
.big.two > svg:first-child { height: 38px; }
.big.two > span { margin-top: 2px; }
.big.two p { margin: 0; display: flex; align-items: center; gap: 5px; line-height: 20px; }
.big.up { padding-top: 0; } .big.up > span { margin-top: 4px; }
.g-clip .big { width: 54px; margin-left: 14px; padding-top: 3px; }
.g-clip .big > svg:first-child { transform: translateX(3px); }
.stack { margin-left: 6px; width: 142px; }
.stack > div { height: 32px; display: flex; align-items: center; gap: 5px; position: relative; top: -2px; }
.combos { height: 46px; padding-left: 10px; display: flex; align-items: center; gap: 2px; }
.combo { width: 144px; height: 30px; border: 1px solid #6e6e6e; border-radius: 5px; display: flex; align-items: center; justify-content: space-between; padding: 0 3px 0 2px; }
.combo.small { width: 62px; margin-right: 6px; }
.combos > svg + svg { margin-left: 12px; }
.row { height: 46px; align-items: center; }
.row + .row { height: 34px; }
.tools, .aligns .row { display: grid; place-items: center; }
.g-font .tools { padding-left: 9px; grid-template-columns: 32px 32px 30px 18px 8px 26px 22px 4px 32px 14px 42px 4px; }
.g-num .tools { padding-left: 9px; grid-template-columns: 32px 14px 42px 22px 13px 22px 42px; }
.g-num .combo { width: 180px; }
.glyph { font-size: 17px; color: #ccc; }
.serif { font-family: "Liberation Serif", serif; font-size: 19px; }
.aligns { width: 178px; }
.aligns .row { padding-left: 9px; grid-template-columns: 32px 32px 32px 3px 32px 10px; }
.aligns .row + .row { grid-template-columns: 32px 32px 32px 3px 32px 32px; }
.pressed { width: 30px; height: 30px; border: 1px solid #999; border-radius: 5px; background: #333; display: grid; place-items: center; }
.tall { height: 78px; margin-top: 7px; }
.wraps { padding-left: 12px; }
.wraps > div { height: 46px; display: flex; align-items: center; gap: 5px; }
.wraps > div + div { height: 34px; }
.wraps .c { margin-left: 10px; }
.bigs { display: grid; }
.g-styles .bigs { grid-template-columns: 96px 72px 58px; padding-left: 7px; }
.g-cells .bigs { grid-template-columns: 54px 54px 52px; padding-left: 9px; }
.g-edit .stack { margin-left: 15px; width: 114px; }
.g-edit .big { width: 57px; }
.g-edit .big:nth-child(2) { margin-left: 2px; }
.collapse { width: 13px; height: 9px; margin: 102px 0 0 47px; }

.formula { height: 88px; padding: 10px 10px 0 10px; display: flex; flex: none; align-items: flex-start; }
.formula > div { background: #292929; border: 1px solid #666; border-radius: 5px; height: 30px; }
.namebox { width: 127px; display: flex; align-items: center; justify-content: space-between; padding: 0 6px; }
.namebox svg { width: 13px; height: 9px; }
.formula .dots { margin: 8px 10px 0 11px; }
.fx { width: 92px; display: flex; align-items: center; padding-left: 7px; gap: 12px; }
.fx em { font: italic 23px/26px "Liberation Serif", serif; color: #ddd; }
.formula .input { flex: 1; height: 78px; margin-left: 5px; }
.input svg { width: 12px; height: 8px; transform: rotate(180deg); margin: 8px 5px 0 auto; }

.sheet { height: 635px; flex: none; margin-top: 8px; display: grid; grid-template: 11px 623px / 21px 1874px 25px; border-bottom: 1px solid #444; }
.corner { grid-area: 1 / 1; border-right: 1px solid #888; border-bottom: 1px solid #888; }
.cols { grid-area: 1 / 2; display: flex; overflow: hidden; border-bottom: 1px solid #999; }
.cols span { width: 29px; height: 10px; flex: none; border-right: 1px solid #606060; text-align: center; font: bold 5.500px/9px "DejaVu Sans", sans-serif; color: #eee; }
.cols .hit { background: #666; border-bottom: 2px solid #217346; }
.rows { grid-area: 2 / 1; overflow: hidden; border-right: 1px solid #999; }
.rows span { display: block; height: 9px; border-bottom: 1px solid #606060; text-align: center; font: bold 5.500px/9px "DejaVu Sans", sans-serif; color: #eee; }
.rows .hit { background: #666; border-right: 2px solid #217346; }
.canvas { grid-area: 2 / 2; background: #fff; position: relative; overflow: hidden; border-right: 1px solid #666; }
.band { width: 1869px; height: 25px; background: #7030a0; border: solid #c8b8d4; border-width: 0 1px 1px 0; }
.lowband { position: absolute; left: 0; top: 607px; width: 362px; height: 20px; background: #b4c6e7; border: solid #d0d0d0; border-width: 1px 1px 0 0; }
.obj { position: absolute; }
svg.obj { overflow: hidden; }
.trend { left: 0; top: 37px; }
.timeline { left: 0; top: 335px; }
.pie { left: 626px; top: 36px; }
.bars { left: 612px; top: 283px; }
.cursor { left: 1796px; top: 412px; width: 32px; height: 12px; border: 2px solid #217346; }
.cursor::after { content: ""; position: absolute; right: -4px; bottom: -4px; width: 6px; height: 6px; background: #217346; border: solid #fff; border-width: 1px 0 0 1px; }
.tiny { font-size: 4.800px; font-weight: 600; }
.time-text { fill: #7c2626; font-size: 5.200px; font-weight: 700; }
.order { font-size: 4.800px; font-weight: 600; fill: #4c4c4c; }
text.months { font: bold 23px "Liberation Serif", serif; fill: #ffc000; }
.pie-num text { font-size: 5.600px; font-weight: 700; fill: #fff; text-anchor: middle; }
.slicer { background: #fff; color: #000; font: bold 6px/10px "DejaVu Sans", sans-serif; padding: 0 3px; }
.slicer h4 { margin: 0; height: 12px; display: flex; justify-content: space-between; align-items: center; font-size: 7px; border-bottom: 1px solid; }
.slicer h4 b { color: #000; }
.slicer p { margin: 0 0 1px; height: 11px; border-radius: 3px; padding-left: 4px; background: #dedede; color: #888; font-weight: 400; font-size: 7px; line-height: 11px; }
.roast { left: 90px; top: 47px; width: 289px; height: 58px; border: 1px solid #ed7d31; }
.roast h4 { border-color: #ed7d31; }
.roast .sel { background: #ed7d31; color: #fff; }
.size { left: 107px; top: 215px; width: 271px; height: 76px; border: 1px solid #70ad47; }
.size h4 { border-color: #70ad47; }
.size p { background: #e2efda; color: #777; border: 1px solid #c4c4c4; line-height: 10px; }
.size .sel { background: #c6e0b4; color: #000; border-color: #909090; }
.vscroll { grid-area: 1 / 3 / 3 / 4; margin-left: 2px; width: 21px; height: 637px; background: #141414; border-radius: 10px; display: flex; flex-direction: column; align-items: center; padding: 5px 0 4px; z-index: 2; }
.vscroll i { width: 11px; height: 367px; border-radius: 6px; background: #999; margin: 11px 0 auto; }

.tabs { height: 41px; flex: none; display: flex; align-items: center; font-size: 16.500px; border-bottom: 1px solid #3a3a3a; }
.arrows { margin-left: 30px; margin-top: -3px; }
.tabs span { height: 30px; line-height: 31px; border-right: 1px solid #5c5c5c; text-align: center; }
.t1 { width: 85px; margin-left: 55px; } .t2 { width: 85px; } .t3 { width: 82px; } .t4 { width: 113px; } .t5 { width: 81px; } .t7 { width: 102px; border-left: 1px solid #5c5c5c; }
.tabs .active { width: 107px; margin: -6px 5px 0; height: 35px; background: #fff; color: #262626; border-radius: 0 0 6px 6px; line-height: 33px; font-weight: 600; border: 0; display: flex; flex-direction: column; align-items: center; }
.active::after { content: ""; width: 88px; height: 2px; background: #107c41; margin-top: -4px; }
.plus { margin: -3px 0 0 51px; }
.tabs .dots { margin-left: 286px; }
.hscroll { margin: -1px 0 0 17px; width: 720px; height: 21px; border-radius: 10px; background: #141414; display: flex; align-items: center; padding: 0 5px; }
.hscroll i { width: 477px; height: 11px; background: #999; border-radius: 5px; margin: 0 auto 0 186px; }

.status { height: 26px; flex: none; background: #151515; display: flex; align-items: center; padding-left: 15px; font-size: 13px; }
.status b { font-weight: 700; margin-left: 5px; }
.macro { margin-left: 24px; } .acc { margin-left: 21px; }
.views { margin-left: auto; display: flex; height: 26px; align-items: center; padding-right: 10px; }
.view { width: 50px; height: 26px; display: grid; place-items: center; }
.view.on { background: #262626; }
.views > svg { margin: 0 10px 0 10px; overflow: visible; }

.taskbar { height: 60px; flex: none; background: #53255f; border-top: 2px solid #67486f; display: flex; position: relative; }
.widget { width: 265px; padding: 5px 0 0 26px; position: relative; }
.widget b { position: absolute; left: 40px; top: 7px; width: 20px; height: 20px; border-radius: 50%; background: #ff99a4; color: #222; font-size: 14px; font-weight: 400; text-align: center; }
.apps { display: flex; }
.apps > span { width: 55.100px; height: 58px; display: grid; place-items: center; position: relative; padding-bottom: 3px; }
.run::after { content: ""; position: absolute; bottom: 5px; left: 23px; width: 8px; height: 4px; border-radius: 2px; background: #a996ae; }
.cur { background: linear-gradient(#663872, #663872) center 1px / 50px 56px no-repeat; }
.cur::after { left: 17px; width: 20px; background: #dba0e0; }
.s { position: absolute; left: 28px; top: 7px; width: 20px; height: 20px; border-radius: 50%; background: #e5407a; font-size: 12px; font-weight: 400; text-align: center; }
.tray { margin-left: auto; display: flex; align-items: center; padding: 0 25px 2px 0; font-size: 15px; }
.tray > svg:nth-child(2) { margin-left: 21px; }
.lang, .clock { display: flex; flex-direction: column; align-items: center; line-height: 20px; }
.lang { margin: 0 23px 0 24px; }
.clock { align-items: flex-end; margin-left: 20px; }
.tray > svg + svg { margin-left: 10px; }
.clock + svg { margin-left: 11px; }
.tray > svg:last-child { margin-left: 21px; }
```

FILE: app.js
```js
const $ = id => document.getElementById(id);

// Tighten or loosen tracking so each label takes its nominal width.
document.querySelectorAll('[data-w]').forEach(el => {
  const want = +el.dataset.w, have = el.getBoundingClientRect().width;
  el.style.letterSpacing = (want - have) / el.textContent.length + 'px';
});

// Column and row headers
const colName = n => (n >= 26 ? String.fromCharCode(64 + Math.floor(n / 26)) : '') + String.fromCharCode(65 + n % 26);
let html = '';
for (let n = 24; n <= 88; n++) html += `<span${n === 86 ? ' class="hit"' : ''}>${colName(n)}</span>`;
$('cols').innerHTML = html;
html = '';
for (let r = 2; r <= 70; r++) html += `<span${r === 48 ? ' class="hit"' : ''}>${r}</span>`;
$('rows').innerHTML = html;

// Trend chart axis
$('trendAxis').innerHTML = [18, 16, 14, 12, 10, 8, 6, 4, 2, 0].map((v, i) => `<text x="88" y="${(426 + i * 21.65).toFixed(1)}">${v}</text>`).join('');

// Timeline
const months = 'OCT NOV DEC JAN FEB MAR APR MAY JUN JUL AUG SEP OCT NOV DEC JAN FEB'.split(' ');
const mx = [34, 58, 78, 100, 122, 144, 165, 188, 209, 230, 254, 274, 297, 319, 341, 363, 385];
$('timeLabels').innerHTML += months.map((m, i) => `<text x="${mx[i]}" y="708" text-anchor="middle" textLength="9">${m}</text>`).join('');
const edges = [20, 28, 51, 72, 94, 117, 137, 159, 181, 203, 225, 247, 269, 291, 313, 335, 357, 380, 400];
$('timeCells').innerHTML = edges.slice(0, -1).map((e, i) => `<rect x="${e + 1}" y="711" width="${edges[i + 1] - e - 1}" height="8"/>`).join('');

// Quantity per customer
const first = '666236236633356151626333662245663264412356646467161632365326424241263632616566344656464456453414256548544426665665631363223524236123526615462164524441366235354524566775645665625622264485446371546356552166654642532422244631616146425654524535656356213535143325366646264646464253555736281'.split('');
const second = '573628176364565526255563162242625454554554336156746461635336665135333436534263663661234575464636165456352524364314135651461354546542426465645456416444564532434246816366314735613254634645465236356545655164565123144343431644546435346525265661426662226434324262654331355542646263635624654635415555666255662342344254433664536333656624464264'.split('');
const values = [];
for (let i = 0; i < 606; i++) values.push(Math.min(6, +(i < 275 ? first[i % first.length] : second[(i - 275) % second.length])));
const peaks = {677: 16, 684: 11.9, 702: 11, 722: 8, 724: 7, 736: 7, 779: 22, 780: 18, 785: 7, 795: 16, 815: 15, 829: 11, 838: 7, 839: 7, 840: 16, 845: 13, 856: 8, 862: 7, 871: 8, 926: 15, 951: 7, 955: 8, 957: 7, 975: 17, 981: 11, 998: 7, 1016: 13, 1037: 7, 1046: 16, 1070: 17, 1073: 10, 1111: 8, 1120: 7, 1136: 9, 1180: 11, 1186: 8, 1196: 15, 1249: 18};
$('barPath').setAttribute('d', values.map((v, i) => {
  const x = 675 + i, h = Math.round((peaks[x] || v) * 8.52);
  return `M${x} 878v-${h}h1v${h}z`;
}).join(''));

const orders = `00246-15080-LE 01104-59807-OB 02009-87294-SY 04152-34436-IE 05325-97750-WP 06624-54037-BQ 07591-92789-UA 09405-32165-BS 09898-98620-IH 10138-31681-SD 11408-81032-UR 12607-75113-UV 13324-78688-MI 14121-20527-OJ 15064-65241-HB 16046-34805-ZF 17008-16989-PL 18275-73980-KL 19413-02045-CG 20236-42322-CM 21403-49423-PD 22721-63196-UJ 23806-46781-OU 24845-36117-TI 25729-68859-UA 27493-46921-TZ 28300-14103-GF 29123-60884-KG 31245-81098-PJ 32070-55528-UG 33011-52383-BA 34666-76738-SQ 36078-91009-WU 37274-08534-FM 38890-22576-UI 39457-62611-YK 40535-56770-UM 41611-34336-WT 43605-12616-YH 44865-58249-RY 46431-09298-OU 47268-50127-XY 48410-01347-XP 49084-44492-OJ 49860-68865-AB 51277-93873-RP 52143-35672-JF 53486-73919-BQ 53971-49906-PZ 55232-81621-BX 56969-48689-MO 57360-46846-NS 58638-01029-CB 59572-41990-XY 60370-41934-IF 61437-83623-PZ 62682-27930-PD 63787-96257-TQ 64875-71224-UI 66044-25298-TA 66776-88682-RG 67743-54817-UT 68894-91205-MP 69503-12127-YD 70451-38048-AH 71891-51101-VQ 73017-69644-MS 74330-29286-RO 75977-30364-AY 76447-50326-IC 77154-45038-IH 77828-66867-KH 79058-02767-CP 80310-92912-JA 81744-27332-RR 82300-82197-UN 84045-66771-SL 84941-67734-TG 86144-10144-CB 86779-84838-EJ 87858-83734-RK 89115-11966-VF 89757-51438-HX 90816-65619-LM 91460-04526-II 92599-58687-CS 93676-95250-XJ 94840-49457-UD 96434-50068-DZ 97152-03355-IW 98636-90072-YC 99869-55718-UU`.split(' ');
const step = 604 / (orders.length - 1);
$('orderLabels').innerHTML = orders.map((o, i) => `<text transform="translate(${(677 + i * step).toFixed(2)} 882) rotate(-90)" text-anchor="end" textLength="37">${o}</text>`).join('');
```
